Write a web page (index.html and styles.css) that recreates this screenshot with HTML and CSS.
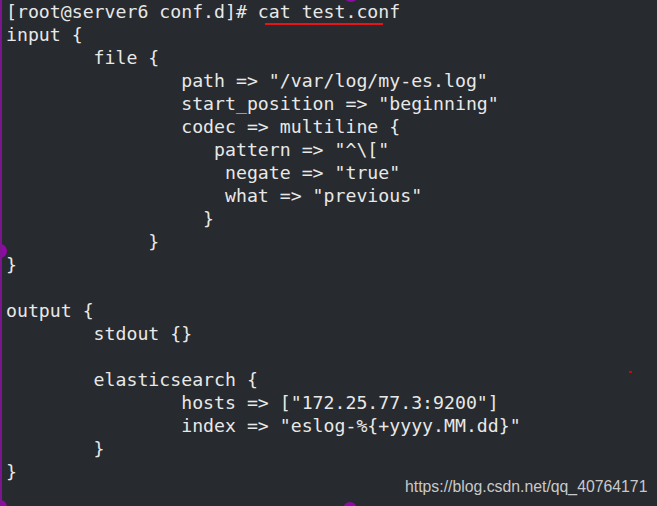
FILE: index.html
```html
<!DOCTYPE html>
<html>
<head>
<meta charset="utf-8">
<link rel="stylesheet" href="styles.css">
</head>
<body>
<div class="screen">
<div class="term">
<div class="line">[root@server6 conf.d]# cat test.conf</div>
<div class="line">input {</div>
<div class="line">        file {</div>
<div class="line">                path =&gt; "/var/log/my-es.log"</div>
<div class="line">                start_position =&gt; "beginning"</div>
<div class="line">                codec =&gt; multiline {</div>
<div class="line">                   pattern =&gt; "^\["</div>
<div class="line">                    negate =&gt; "true"</div>
<div class="line">                    what =&gt; "previous"</div>
<div class="line">                  }</div>
<div class="line">             }</div>
<div class="line">}</div>
<div class="line"> </div>
<div class="line">output {</div>
<div class="line">        stdout {}</div>
<div class="line"> </div>
<div class="line">        elasticsearch {</div>
<div class="line">                hosts =&gt; ["172.25.77.3:9200"]</div>
<div class="line">                index =&gt; "eslog-%{+yyyy.MM.dd}"</div>
<div class="line">        }</div>
<div class="line">}</div>
</div>
<span class="underline"></span>
<span class="dot dot-top"></span>
<span class="dot dot-left"></span>
<span class="dot dot-bl"></span>
<span class="dot dot-bottom"></span>
<span class="pixel"></span>
<span class="watermark">https://blog.csdn.net/qq_40764171</span>
</div>
</body>
</html>
```
FILE: styles.css
```css
html, body {
  margin: 0;
  padding: 0;
  background: #272a2e;
  overflow: hidden;
}
.screen {
  position: relative;
  width: 657px;
  height: 506px;
  box-sizing: border-box;
  border-left: 2px solid #7d1590;
  background: #272a2e;
  overflow: hidden;
}
.term {
  display: flex;
  flex-direction: column;
  align-items: flex-start;
  padding: 0 0 0 4px;
  font-family: "DejaVu Sans Mono", monospace;
  font-size: 18.2px;
  line-height: 23px;
  color: #e8e8e8;
}
.line {
  white-space: pre;
  height: 23px;
}
.underline {
  position: absolute;
  left: 263px;
  top: 23px;
  width: 118px;
  height: 2px;
  background: #e8141a;
}
.dot {
  position: absolute;
  border-radius: 50%;
  background: #8c0ba0;
}
.dot-top {
  left: 343px;
  top: -6px;
  width: 12px;
  height: 8px;
}
.dot-left {
  left: -9px;
  top: 244px;
  width: 14px;
  height: 14px;
}
.dot-bl {
  left: -9px;
  top: 500px;
  width: 14px;
  height: 14px;
}
.dot-bottom {
  left: 341px;
  top: 502px;
  width: 14px;
  height: 14px;
}
.pixel {
  position: absolute;
  left: 627px;
  top: 371px;
  width: 3px;
  height: 2px;
  background: #e00000;
}
.watermark {
  position: absolute;
  left: 403px;
  top: 477px;
  font-family: "Liberation Sans", Arial, sans-serif;
  font-size: 15.8px;
  line-height: 20px;
  color: #c9c9c9;
  white-space: nowrap;
}
```
